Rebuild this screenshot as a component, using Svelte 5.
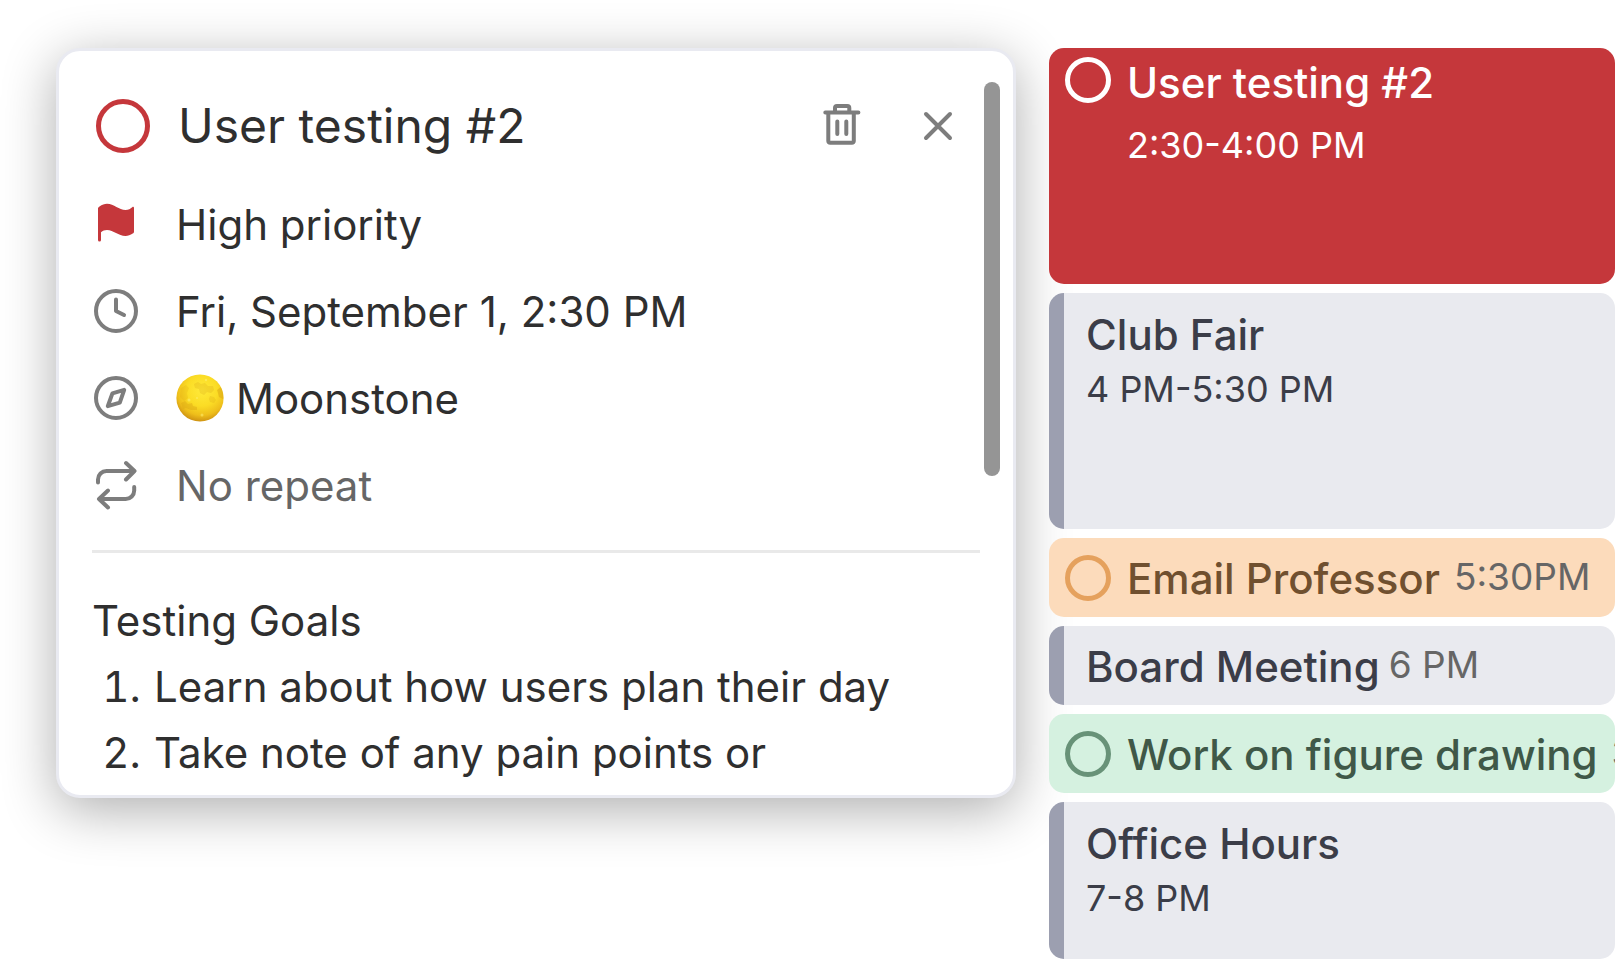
<script>
  let events = $state([
    { title: 'User testing #2', time: '2:30-4:00 PM', kind: 'task', tone: 'red', size: 'long', done: false },
    { title: 'Club Fair', time: '4 PM-5:30 PM', kind: 'event', tone: 'slate', size: 'long' },
    { title: 'Email Professor', time: '5:30PM', kind: 'task', tone: 'orange', size: 'short', done: false },
    { title: 'Board Meeting', time: '6 PM', kind: 'event', tone: 'slate', size: 'short' },
    { title: 'Work on figure drawing', time: '3', kind: 'task', tone: 'green', size: 'short', done: false },
    { title: 'Office Hours', time: '7-8 PM', kind: 'event', tone: 'slate', size: 'medium' }
  ]);
  const goals = ['Learn about how users plan their day', 'Take note of any pain points or'];
</script>

<main class="page">
  <article class="detail">
    <div class="body">
      <header class="head">
        <input class="check" type="checkbox" aria-labelledby="detail-title" />
        <h1 id="detail-title">User testing #2</h1>
        <button type="button" class="tool" aria-label="Delete">
          <svg viewBox="0 0 48 48" class="icon">
            <path d="M7.3 10.4H40.4M17 10.4V6a2 2 0 0 1 2-2h10.3a2 2 0 0 1 2 2v4.4M10.3 10.4V39a1.8 1.8 0 0 0 1.8 1.8H34a1.8 1.8 0 0 0 1.8-1.8V10.4M19.3 19.5V32M28.3 19.5V32" />
          </svg>
        </button>
        <button type="button" class="tool" aria-label="Close">
          <svg viewBox="0 0 48 48" class="icon"><path d="M12 12L36 36M36 12L12 36" /></svg>
        </button>
      </header>

      <ul class="fields">
        <li>
          <svg viewBox="0 0 44 50" class="glyph flag">
            <path d="M4 9.5C4 8.5 4.5 8 5.500 7.400C8 5.500 10.500 4.700 13 4.700C20 4.700 25 11 31.500 11C34.500 11 36.500 9.500 38.200 8.200C39.300 7.500 40 7.800 40 8.900V32.500C40 33.500 39.600 34 38.700 34.600C36.500 36.200 34 37 31.500 37C24.500 37 19.500 31 13 31C10.500 31 8.800 31.800 7 33.200V41A1.500 1.500 0 0 1 4 41Z" />
          </svg>
          <span>High priority</span>
        </li>
        <li>
          <svg viewBox="0 0 44 50" class="glyph">
            <circle cx="22" cy="25" r="20" />
            <path d="M22 13.500V25L30 29" />
          </svg>
          <span>Fri, September 1, 2:30 PM</span>
        </li>
        <li>
          <svg viewBox="0 0 44 50" class="glyph">
            <circle cx="22" cy="25" r="20" />
            <path d="M30.200 16.800L18.400 20.400L13.800 33.200L25.800 29.600Z" />
          </svg>
          <span class="project">
            <svg viewBox="0 0 48 48" class="moon">
              <defs>
                <radialGradient id="moon-body" cx="54%" cy="34%" r="66%">
                  <stop offset="0" stop-color="#ffea3a" />
                  <stop offset="0.5" stop-color="#fbdc25" />
                  <stop offset="0.8" stop-color="#eebe1b" />
                  <stop offset="1" stop-color="#cf9312" />
                </radialGradient>
                <clipPath id="moon-clip"><circle cx="24" cy="24" r="23.600" /></clipPath>
              </defs>
              <circle cx="24" cy="24" r="23.600" fill="url(#moon-body)" />
              <g clip-path="url(#moon-clip)" fill="#d9a514">
                <path opacity="0.250" d="M18 10l4-2 3 2 4-1 3 3 5 0 1 4-3 3-4-1-3 3-4-2-1-4-4-1z" />
                <path opacity="0.220" d="M5 14l5-3 3 3-2 5 1 5-4 3-4-4z" />
                <path opacity="0.400" d="M5 29l4-2 3 3 4-1 1 3 4 1 0 3-6 0-5-2-3 1z" />
                <path opacity="0.500" d="M41 16l4-3 3 6-1 6-4-2-1-4z" />
                <path opacity="0.250" d="M34 22l4 1 2 3-2 3-4-1-1-3z" />
              </g>
              <g clip-path="url(#moon-clip)" fill="#fff27a" opacity="0.500">
                <circle cx="13" cy="26" r="1.500" /><circle cx="26" cy="41" r="1.500" />
                <circle cx="30" cy="6" r="1.200" /><circle cx="21" cy="24" r="1" />
              </g>
            </svg>
            Moonstone
          </span>
        </li>
        <li class="muted">
          <svg viewBox="0 0 44 50" class="glyph">
            <path d="M4 22.500V19.500A8.500 8.500 0 0 1 12.500 11H40M32 3L40.500 11L32 19.500M40.200 27V30.500A8.500 8.500 0 0 1 31.700 39H5M14 30.500L5 39L14 47.500" />
          </svg>
          <span>No repeat</span>
        </li>
      </ul>

      <section class="notes">
        <p>Testing Goals</p>
        <ol>
          {#each goals as goal}<li>{goal}</li>{/each}
        </ol>
      </section>
    </div>
    <div class="track"><div class="thumb"></div></div>
  </article>

  <section class="agenda" aria-label="Agenda">
    {#each events as item, i}
      <div class="slot {item.kind} {item.tone} {item.size}">
        {#if item.kind === 'task'}
          <input class="check" type="checkbox" id="task-{i}" bind:checked={item.done} />
        {/if}
        <div class="label">
          {#if item.kind === 'task'}
            <label class="title" for="task-{i}">{item.title}</label>
          {:else}
            <span class="title">{item.title}</span>
          {/if}
          <span class="time">{item.time}</span>
        </div>
      </div>
    {/each}
  </section>
</main>

<style>
  :global(body) {
    margin: 0;
    background: #fff;
    overflow: hidden;
  }
  .page {
    display: grid;
    grid-template-columns: minmax(0, 960fr) minmax(0, 566fr);
    gap: 33px;
    align-items: start;
    padding: 48px 0 0 56px;
    font-family: Inter, 'Liberation Sans', sans-serif;
    font-size: 42px;
    color: #2f2f2f;
  }
  h1, p, ul, ol {
    margin: 0;
    padding: 0;
    font-weight: 400;
  }
  .check {
    appearance: none;
    flex: none;
    box-sizing: border-box;
    margin: 0;
    border: 5px solid currentColor;
    border-radius: 50%;
    cursor: pointer;
  }
  .check:checked {
    background: currentColor;
  }

  .detail {
    display: flex;
    gap: 4px;
    padding: 30px 13px 9px 33px;
    border: 3px solid #e9eaf1;
    border-radius: 24px;
    background: #fff;
    box-shadow: 0 12px 54px rgba(0, 0, 0, 0.32);
  }
  .body {
    flex: 1;
    min-width: 0;
  }
  .head {
    display: flex;
    align-items: center;
    gap: 48px;
    padding: 14px 18px 24px 4px;
  }
  .head .check {
    width: 54px;
    height: 54px;
    color: #c5373b;
  }
  h1 {
    flex: 1;
    margin-left: -20px;
    font-size: 48px;
    line-height: 62px;
  }
  .tool {
    display: block;
    padding: 0;
    border: 0;
    background: none;
    cursor: pointer;
  }
  .icon {
    display: block;
    width: 48px;
    height: 48px;
  }
  .icon, .glyph {
    fill: none;
    stroke: #7d7d7d;
    stroke-width: 4;
    stroke-linecap: round;
    stroke-linejoin: round;
  }
  .fields {
    list-style: none;
    padding-bottom: 21px;
    border-bottom: 3px solid #e9e9e9;
  }
  .fields li {
    display: flex;
    align-items: center;
    gap: 38px;
    padding-left: 2px;
    line-height: 87px;
  }
  .glyph {
    flex: none;
    width: 44px;
    height: 50px;
    margin-bottom: 2px;
  }
  .flag {
    fill: #c5373b;
    stroke: none;
  }
  .muted {
    color: #666;
  }
  .project {
    display: flex;
    align-items: center;
    gap: 12px;
  }
  .moon {
    width: 48px;
    height: 48px;
    margin-bottom: 2px;
  }
  .notes {
    padding-top: 35px;
    line-height: 66px;
  }
  ol {
    padding-left: 60px;
  }
  ol li {
    padding-left: 2px;
  }
  .track {
    flex: none;
    width: 16px;
    padding-top: 1px;
  }
  .thumb {
    height: 56%;
    border-radius: 8px;
    background: #959595;
  }

  .agenda {
    display: grid;
    gap: 9px;
  }
  .slot {
    display: flex;
    align-items: flex-start;
    gap: 16px;
    box-sizing: border-box;
    padding: 14px 0 0 22px;
    border-radius: 15px;
    line-height: 56px;
    white-space: nowrap;
    overflow: hidden;
    /* keeps each slot painted above the detail card's shadow */
    position: relative;
  }
  .short {
    min-height: 79px;
    padding-top: 13px;
  }
  .medium { min-height: 157px; }
  .long { min-height: 236px; }
  .label {
    display: flex;
    flex-direction: column;
  }
  .short .label {
    flex-direction: row;
    gap: 9px;
  }
  .title {
    font-weight: 500;
  }
  .time {
    font-size: 36px;
    line-height: 52px;
  }
  .short .time {
    font-size: 37px;
    color: #666;
  }
  .event {
    border-left: 15px solid #9c9fb0;
    background: #e9eaef;
    color: #3b3d48;
  }
  .task {
    padding-left: 16px;
  }
  .task .check {
    width: 46px;
    height: 46px;
    margin-top: 4px;
  }
  .task.short .label {
    gap: 14px;
  }
  .task.long {
    padding-top: 7px;
  }
  .task.long .check {
    margin-top: 2px;
  }
  .task.long .label {
    gap: 8px;
  }
  .red {
    background: #c5373b;
    color: #fff;
  }
  .red .check { color: #fff; }
  .orange {
    background: #fcdbbb;
    color: #70502f;
  }
  .orange .check { color: #e5a15d; }
  .green {
    background: #d5f1e0;
    color: #3f5848;
  }
  .green .check { color: #689278; }
</style>
